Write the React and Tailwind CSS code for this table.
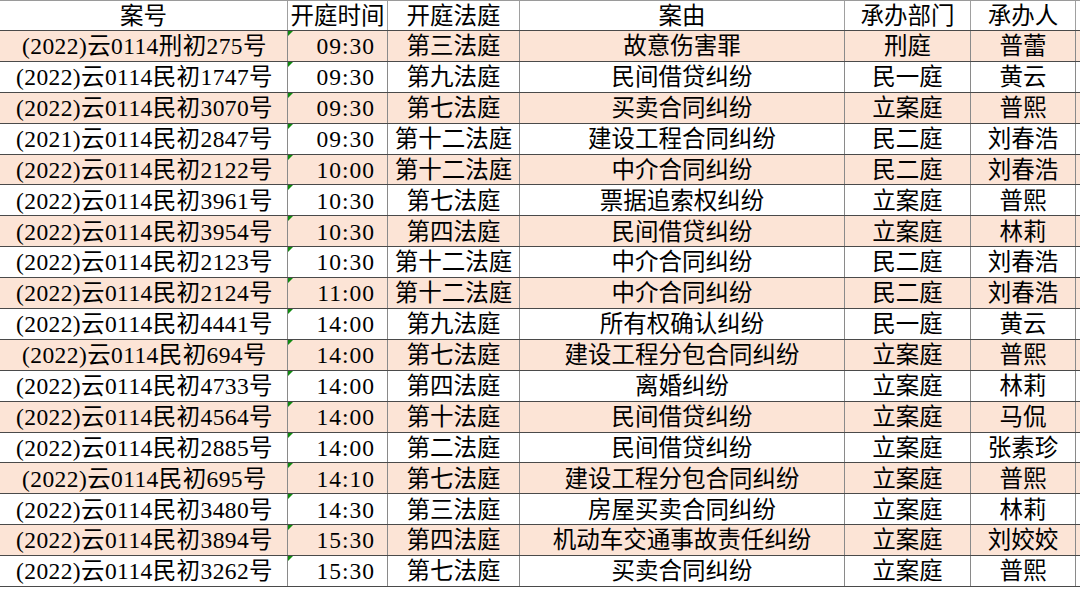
const ROWS = [
  ['(2022)云0114刑初275号', '09:30', '第三法庭', '故意伤害罪', '刑庭', '普蕾'],
  ['(2022)云0114民初1747号', '09:30', '第九法庭', '民间借贷纠纷', '民一庭', '黄云'],
  ['(2022)云0114民初3070号', '09:30', '第七法庭', '买卖合同纠纷', '立案庭', '普熙'],
  ['(2021)云0114民初2847号', '09:30', '第十二法庭', '建设工程合同纠纷', '民二庭', '刘春浩'],
  ['(2022)云0114民初2122号', '10:00', '第十二法庭', '中介合同纠纷', '民二庭', '刘春浩'],
  ['(2022)云0114民初3961号', '10:30', '第七法庭', '票据追索权纠纷', '立案庭', '普熙'],
  ['(2022)云0114民初3954号', '10:30', '第四法庭', '民间借贷纠纷', '立案庭', '林莉'],
  ['(2022)云0114民初2123号', '10:30', '第十二法庭', '中介合同纠纷', '民二庭', '刘春浩'],
  ['(2022)云0114民初2124号', '11:00', '第十二法庭', '中介合同纠纷', '民二庭', '刘春浩'],
  ['(2022)云0114民初4441号', '14:00', '第九法庭', '所有权确认纠纷', '民一庭', '黄云'],
  ['(2022)云0114民初694号', '14:00', '第七法庭', '建设工程分包合同纠纷', '立案庭', '普熙'],
  ['(2022)云0114民初4733号', '14:00', '第四法庭', '离婚纠纷', '立案庭', '林莉'],
  ['(2022)云0114民初4564号', '14:00', '第十法庭', '民间借贷纠纷', '立案庭', '马侃'],
  ['(2022)云0114民初2885号', '14:00', '第二法庭', '民间借贷纠纷', '立案庭', '张素珍'],
  ['(2022)云0114民初695号', '14:10', '第七法庭', '建设工程分包合同纠纷', '立案庭', '普熙'],
  ['(2022)云0114民初3480号', '14:30', '第三法庭', '房屋买卖合同纠纷', '立案庭', '林莉'],
  ['(2022)云0114民初3894号', '15:30', '第四法庭', '机动车交通事故责任纠纷', '立案庭', '刘姣姣'],
  ['(2022)云0114民初3262号', '15:30', '第七法庭', '买卖合同纠纷', '立案庭', '普熙'],
]

const HEAD = ['案号', '开庭时间', '开庭法庭', '案由', '承办部门', '承办人']

const cols = 'grid grid-cols-[288px_100px_132px_325px_126px_105px]'

/* Excel's little green "number as text" flag */
function Flag() {
  return (
    <svg className="absolute left-0 top-0" width="5" height="5" viewBox="0 0 5 5" aria-hidden="true">
      <polygon points="0,0 5,0 0,5" fill="#118a11" />
    </svg>
  )
}

export default function App() {
  return (
    <div className="w-[1080px] h-[589px] bg-white overflow-hidden font-['Liberation_Serif','Noto_Sans_CJK_SC',serif] text-[23.5px] text-black leading-none">
      <div className="h-[587px] flex flex-col border-t border-[#9a9a9a]">
        {/* header */}
        <div className={`${cols} h-[30px] shrink-0 border-b border-[#4a4a4a]`}>
          {HEAD.map((h, i) => (
            <div key={i} className="flex items-center justify-center pt-[2px] border-r border-[#a0a0a0]">
              {h}
            </div>
          ))}
        </div>

        {/* rows */}
        {ROWS.map((r, ri) => (
          <div
            key={ri}
            className={`${cols} flex-1 border-b border-[#4a4a4a] ${ri % 2 === 0 ? 'bg-[#fce4d6]' : 'bg-white'}`}
          >
            <div className="flex items-center justify-center pt-[2px] pl-[2px] tracking-[0.4px] border-r border-[#8a8a8a]">{r[0]}</div>
            <div className="relative flex items-center justify-end pt-[2px] pr-[12px] tracking-[1px] border-r border-[#8a8a8a]">
              <Flag />
              {r[1]}
            </div>
            <div className="flex items-center justify-center pt-[2px] border-r border-[#8a8a8a]">{r[2]}</div>
            <div className="flex items-center justify-center pt-[2px] border-r border-[#8a8a8a]">{r[3]}</div>
            <div className="flex items-center justify-center pt-[2px] border-r border-[#8a8a8a]">{r[4]}</div>
            <div className="flex items-center justify-center pt-[2px] border-r border-[#8a8a8a]">{r[5]}</div>
          </div>
        ))}
      </div>
    </div>
  )
}
